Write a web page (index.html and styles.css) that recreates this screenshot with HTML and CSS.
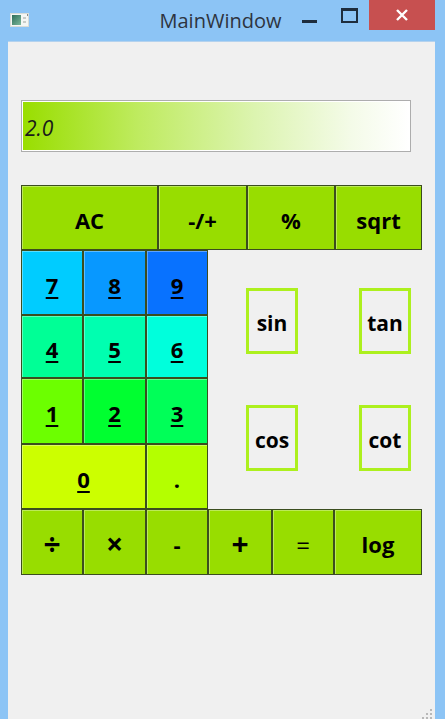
FILE: index.html
```html
<!DOCTYPE html>
<html>
<head>
<meta charset="utf-8">
<title>MainWindow</title>
<link rel="stylesheet" href="styles.css">
</head>
<body>
<div class="window">
  <div class="titlebar">
    <div class="tb-left">
      <svg class="app-icon" width="19" height="14" viewBox="0 0 19 14">
        <rect x="0.5" y="0.5" width="18" height="13" fill="#f4f6f4" stroke="#d8dcd8"/>
        <defs><linearGradient id="ig" x1="0" y1="0" x2="1" y2="1"><stop offset="0" stop-color="#2e6e5a"/><stop offset="1" stop-color="#7cb89a"/></linearGradient></defs>
        <rect x="2" y="2" width="9" height="10" fill="url(#ig)"/>
        <rect x="13" y="4" width="3" height="2" fill="#c8ccc8"/>
        <rect x="13" y="8" width="3" height="2" fill="#c8ccc8"/>
        <rect x="17" y="1" width="1" height="2" fill="#8a8a8a"/>
      </svg>
    </div>
    <div class="title">MainWindow</div>
    <div class="tb-right">
      <div class="btn-min"></div>
      <div class="btn-max"></div>
      <div class="btn-close">
        <svg width="14" height="14" viewBox="0 0 14 14"><path d="M2 2 L12 12 M12 2 L2 12" stroke="#fff" stroke-width="2.4"/></svg>
      </div>
    </div>
  </div>
  <div class="frame">
    <div class="client">
      <div class="display"><span class="display-text">2.0</span></div>
      <div class="keypad">
        <div class="row">
          <button class="key fn w137">AC</button>
          <button class="key fn w89">-/+</button>
          <button class="key fn w88">%</button>
          <button class="key fn w87">sqrt</button>
        </div>
        <div class="middle">
          <div class="digits">
            <button class="key d7"><u>7</u></button>
            <button class="key d8"><u>8</u></button>
            <button class="key d9"><u>9</u></button>
            <button class="key d4"><u>4</u></button>
            <button class="key d5"><u>5</u></button>
            <button class="key d6"><u>6</u></button>
            <button class="key d1"><u>1</u></button>
            <button class="key d2"><u>2</u></button>
            <button class="key d3"><u>3</u></button>
            <button class="key d0"><u>0</u></button>
            <button class="key dot">.</button>
          </div>
          <div class="trig">
            <button class="tkey">sin</button>
            <button class="tkey">tan</button>
            <button class="tkey">cos</button>
            <button class="tkey">cot</button>
          </div>
        </div>
        <div class="row">
          <button class="key fn w62 sym">÷</button>
          <button class="key fn w63 sym">×</button>
          <button class="key fn w62">-</button>
          <button class="key fn w64 sym">+</button>
          <button class="key fn w62 eq">=</button>
          <button class="key fn w88">log</button>
        </div>
      </div>
      <svg class="grip" width="14" height="12" viewBox="0 0 14 12">
        <rect x="10" y="0" width="2" height="2" fill="#b8b8b8"/>
        <rect x="6" y="4" width="2" height="2" fill="#b8b8b8"/>
        <rect x="10" y="4" width="2" height="2" fill="#b8b8b8"/>
        <rect x="2" y="8" width="2" height="2" fill="#b8b8b8"/>
        <rect x="6" y="8" width="2" height="2" fill="#b8b8b8"/>
        <rect x="10" y="8" width="2" height="2" fill="#b8b8b8"/>
      </svg>
    </div>
  </div>
</div>
</body>
</html>
```

FILE: styles.css
```css
* { box-sizing: border-box; }
html, body { margin: 0; padding: 0; }
body {
  width: 445px;
  height: 719px;
  overflow: hidden;
  background: #8cc4f5;
  font-family: "Open Sans", "DejaVu Sans", sans-serif;
}
.window {
  display: flex;
  flex-direction: column;
  height: 719px;
}
.titlebar {
  height: 41px;
  display: grid;
  grid-template-columns: 1fr auto 1fr;
  flex: none;
}
.tb-left { display: flex; align-items: flex-start; }
.app-icon { margin: 13px 0 0 10px; }
.title {
  font-size: 20px;
  line-height: 24px;
  padding-top: 9px;
  padding-right: 4px;
  color: #2e3440;
}
.tb-right {
  display: flex;
  justify-content: flex-end;
  align-items: flex-start;
  padding-right: 10px;
}
.btn-min {
  width: 15px;
  height: 3px;
  background: #1e2d3d;
  margin-top: 20px;
  margin-right: 24px;
}
.btn-max {
  width: 17px;
  height: 15px;
  border: 2px solid #1e2d3d;
  border-top-width: 3px;
  margin-top: 8px;
  margin-right: 11px;
}
.btn-close {
  width: 66px;
  height: 30px;
  background: #c75050;
  display: flex;
  align-items: center;
  justify-content: center;
}
.frame {
  flex: 1;
  padding: 0 10px 0 8px;
  display: flex;
}
.client {
  flex: 1;
  background: #f0f0f0;
  border-top: 1px solid #b4d2ee;
  padding: 58px 0 0 13px;
  display: flex;
  flex-direction: column;
}
.display {
  width: 390px;
  height: 52px;
  border: 1px solid #adadad;
  padding: 1px;
  background: #fff;
  display: flex;
}
.display-text {
  flex: 1;
  display: flex;
  align-items: center;
  padding: 3px 0 0 2px;
  background: linear-gradient(to right, #99de00 0%, #bfeb60 30%, #dcf4b0 60%, #f4fbe8 85%, #ffffff 100%);
  font-style: italic;
  font-size: 21px;
  color: #1a1a1a;
}
.keypad {
  margin-top: 33px;
  width: 401px;
  display: flex;
  flex-direction: column;
}
.row { display: flex; height: 65px; }
.row:last-child { height: 66px; }
.key {
  margin: 0;
  padding: 4px 0 0 0;
  font-family: "Open Sans", "DejaVu Sans", sans-serif;
  font-weight: 700;
  font-size: 22px;
  color: #000;
  border: 1px solid #3b4d1e;
  box-shadow: inset 1px 1px 0 rgba(255,255,255,0.35);
  display: flex;
  align-items: center;
  justify-content: center;
}
.key u { text-decoration-thickness: 2px; text-underline-offset: 3px; }
.fn { background: #98dd00; height: 100%; }
.w137 { width: 137px; }
.w89 { width: 89px; }
.w88 { width: 88px; }
.w87 { width: 87px; }
.w62 { width: 62px; }
.w63 { width: 63px; }
.w64 { width: 64px; }
.sym { font-size: 30px; padding-top: 2px; }
.eq { font-weight: 400; font-size: 24px; }
.middle { display: flex; height: 259px; }
.digits {
  display: grid;
  grid-template-columns: 62px 63px 62px;
  grid-template-rows: 65px 63px 66px 65px;
  width: 187px;
}
.d7 { background: #00ccff; }
.d8 { background: #0898ff; }
.d9 { background: #0872ff; }
.d4 { background: #00ff96; }
.d5 { background: #00ffb0; }
.d6 { background: #00ffdc; }
.d1 { background: #6cff00; }
.d2 { background: #00ff30; }
.d3 { background: #00ff58; }
.d0 { background: #ccff00; grid-column: span 2; }
.dot { background: #b4ff00; }
.trig {
  flex: 1;
  display: grid;
  grid-template-columns: 52px 52px;
  grid-template-rows: 66px 66px;
  column-gap: 61px;
  row-gap: 51px;
  padding: 38px 0 0 38px;
}
.tkey {
  margin: 0;
  padding: 4px 0 0 0;
  border: 3px solid #adf01e;
  background: #f0f0f0;
  font-family: "Open Sans", "DejaVu Sans", sans-serif;
  font-weight: 700;
  font-size: 21px;
  color: #000;
  display: flex;
  align-items: center;
  justify-content: center;
}
.grip {
  margin-top: auto;
  align-self: flex-end;
  margin-right: 1px;
  margin-bottom: -2px;
}
```
